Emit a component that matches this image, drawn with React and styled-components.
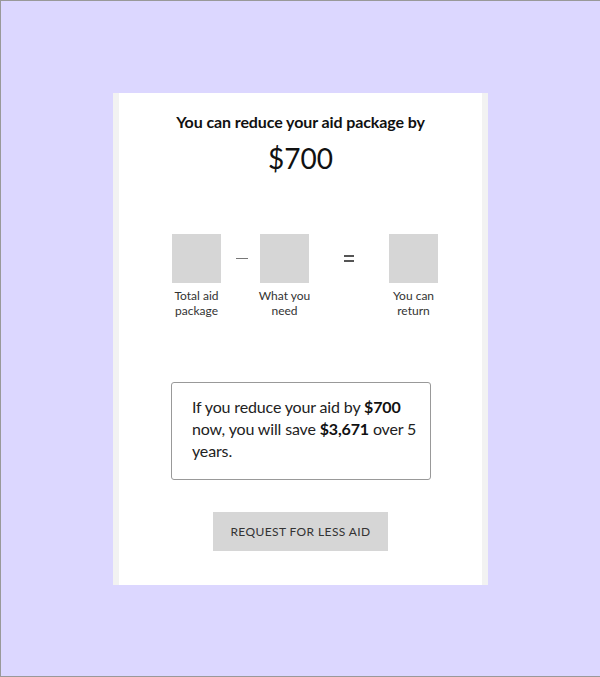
import styled, { createGlobalStyle } from 'styled-components';

const GlobalStyle = createGlobalStyle`
  html, body {
    margin: 0;
    padding: 0;
  }
  body {
    font-family: Lato, "Open Sans", "Liberation Sans", sans-serif;
    color: #111;
  }
`;

const Page = styled.div`
  box-sizing: border-box;
  width: 602px;
  height: 677px;
  background: #dcd7ff;
  border: 1px solid #999;
  padding-top: 92px;
`;

const Card = styled.section`
  box-sizing: border-box;
  width: 375px;
  height: 492px;
  margin-left: 112px;
  background: #fff;
  border-left: 6px solid #f2f2f2;
  border-right: 6px solid #f2f2f2;
  padding: 19px 0 0;
  display: flex;
  flex-direction: column;
  align-items: center;
`;

const Heading = styled.h2`
  margin: 0;
  font-size: 16px;
  font-weight: 700;
  line-height: 20px;
  letter-spacing: -0.1px;
  color: #111;
`;

const Amount = styled.div`
  margin-top: 9px;
  font-size: 28px;
  font-weight: 400;
  line-height: 34px;
  color: #111;
`;

const Equation = styled.div`
  display: flex;
  align-items: flex-start;
  margin-top: 59px;
  padding-left: 9px;
`;

const Term = styled.div`
  width: 49px;
  display: flex;
  flex-direction: column;
  align-items: center;
`;

const Slot = styled.div`
  width: 49px;
  height: 49px;
  background: #d6d6d6;
`;

const TermLabel = styled.div`
  margin-top: 5px;
  width: 80px;
  text-align: center;
  font-size: 12px;
  line-height: 15px;
  color: #333;
`;

const Operator = styled.div`
  width: ${(p) => p.$width}px;
  height: 49px;
  display: flex;
  align-items: center;
  justify-content: center;
  padding-left: ${(p) => p.$shift || 0}px;
  box-sizing: border-box;
`;

const MinusBar = styled.span`
  display: block;
  width: 12px;
  height: 0;
  border-top: 1.5px solid #777;
`;

const EqualsSign = styled.span`
  display: block;
  width: 10px;
  height: 3px;
  border-top: 2px solid #555;
  border-bottom: 2px solid #555;
`;

const Note = styled.p`
  box-sizing: border-box;
  width: 260px;
  margin: 64px 0 0 1px;
  padding: 13px 6px 17px 20px;
  border: 1px solid #999;
  border-radius: 3px;
  font-size: 16px;
  line-height: 22px;
  letter-spacing: -0.15px;
  color: #222;

  b {
    font-weight: 700;
    color: #111;
  }
`;

const RequestButton = styled.button`
  margin-top: 32px;
  width: 175px;
  height: 39px;
  border: none;
  background: #d6d6d6;
  font-family: inherit;
  font-size: 12px;
  letter-spacing: 0.4px;
  text-transform: uppercase;
  color: #333;
  cursor: pointer;
`;

const terms = [
  ['Total aid', 'package'],
  ['What you', 'need'],
  ['You can', 'return'],
];

function TermBlock({ lines }) {
  return (
    <Term>
      <Slot />
      <TermLabel>
        {lines[0]}
        <br />
        {lines[1]}
      </TermLabel>
    </Term>
  );
}

export default function App() {
  return (
    <>
      <GlobalStyle />
      <Page>
        <Card>
          <Heading>You can reduce your aid package by</Heading>
          <Amount>$700</Amount>

          <Equation>
            <TermBlock lines={terms[0]} />
            <Operator $width={39} $shift={2}>
              <MinusBar />
            </Operator>
            <TermBlock lines={terms[1]} />
            <Operator $width={80}>
              <EqualsSign />
            </Operator>
            <TermBlock lines={terms[2]} />
          </Equation>

          <Note>
            If you reduce your aid by <b>$700</b> now, you will save <b>$3,671</b> over 5 years.
          </Note>

          <RequestButton type="button">Request for less aid</RequestButton>
        </Card>
      </Page>
    </>
  );
}
